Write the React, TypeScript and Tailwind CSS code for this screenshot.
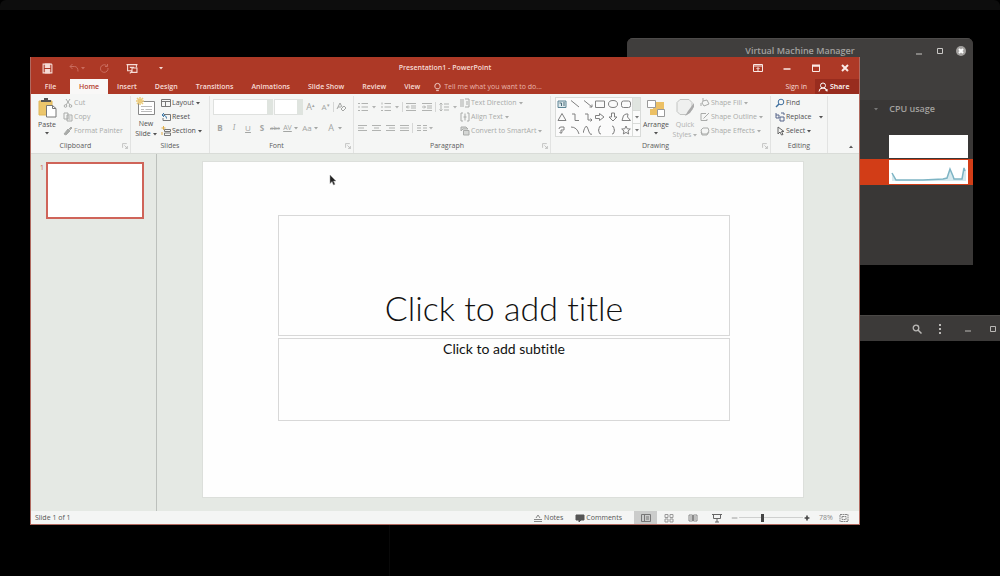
import React, { useState } from 'react';
import { clsx } from 'clsx';

type IconProps = {
  children: React.ReactNode;
  className?: string;
  box?: string;
};

function Icon({ children, className, box = '0 0 10 10' }: IconProps) {
  return (
    <svg
      viewBox={box}
      fill="none"
      stroke="currentColor"
      aria-hidden="true"
      className={clsx('shrink-0', className || 'w-[10px] h-[10px]')}
    >
      {children}
    </svg>
  );
}

function Caret({ className }: { className?: string }) {
  return (
    <Icon box="0 0 4 4" className={clsx('w-[4px] h-[4px]', className)}>
      <path d="M0 1h4L2 3.4z" fill="currentColor" stroke="none" />
    </Icon>
  );
}

const TABS = ['Insert', 'Design', 'Transitions', 'Animations', 'Slide Show', 'Review', 'View'];

const SHAPES = [
  <><path d="M1 2h8v6.500h-8z" fill="#dfe9ec" stroke="#5d8494" /><path d="M2.500 4h2v3M6 4h2M6 6h2" stroke="#4a6c7a" /></>,
  <path d="M1 1.500L9 8" />,
  <><path d="M1 1.500L9 8" /><path d="M9 5.500V8H6.500" /></>,
  <path d="M.5 2h9v6.500h-9z" />,
  <ellipse cx="5" cy="5" rx="4.500" ry="3.500" />,
  <rect x=".5" y="2" width="9" height="6.500" rx="2" />,
  <path d="M5 1.500L9 8.500H1z" />,
  <path d="M2 2h3v6.500h4" />,
  <><path d="M2 2h3v6h4" /><path d="M7.500 6.500L9 8 7.500 9.500" /></>,
  <path d="M.5 3.500h4v-2L9 5 4.500 8.500v-2h-4z" />,
  <path d="M3.500 1h3v4h2.500L5 9 1 5h2.500z" />,
  <path d="M1 8.500l1.500-5L5 2h2L6.500 5l3 3.500z" />,
  <path d="M2 4q0-2 2-2h3v3H4v3M5.500 6.500L4 8.500 2.500 7" />,
  <path d="M1 2q6 0 8 7" />,
  <path d="M0 8Q3-3 5 4t4 5" />,
  <path d="M6 1Q4 1 4 3.500T3 5q1 0 1 2t2 2" />,
  <path d="M4 1q2 0 2 2.500T7 5Q6 5 6 7T4 9" />,
  <path d="M5 1l1.200 2.800L9.300 4 7 6l.7 3L5 7.400 2.300 9 3 6 .7 4l3.100-.2z" />,
];

const SHAPE_NAMES = [
  'Text Box', 'Line', 'Arrow', 'Rectangle', 'Oval', 'Rounded Rectangle',
  'Triangle', 'Elbow Connector', 'Elbow Arrow', 'Right Arrow', 'Down Arrow', 'Freeform',
  'Scribble', 'Arc', 'Curve', 'Left Brace', 'Right Brace', 'Star',
];

const SaveIcon = (
  <Icon className="w-[11px] h-[11px]">
    <path d="M1 1h7.500l.5.500V9H1z" />
    <path d="M3 1h4v3H3zM3 6h4v3H3z" fill="currentColor" />
  </Icon>
);
const UndoIcon = <Icon><path d="M3.500 1L1 3.500 3.500 6M1 3.500h4.500Q9 3.500 9 8.500" /></Icon>;
const RedoIcon = <Icon><path d="M7.500 2.500A3.800 3.800 0 1 0 9 5M8.500 1v2.500H6" /></Icon>;
const ShowIcon = (
  <Icon className="w-[12px] h-[11px]">
    <path d="M0 1.500h10M1 2v5h4M9 2v2M3 4h4" />
    <path d="M5 4.500h4.500v4H5zM3 9.500l2-2" />
  </Icon>
);

type MenuItemProps = {
  icon: React.ReactNode;
  label: string;
  caret?: boolean;
  disabled?: boolean;
  wideCaret?: boolean;
};

function MenuItem({ icon, label, caret, disabled, wideCaret }: MenuItemProps) {
  return (
    <button
      type="button"
      disabled={disabled}
      className={clsx(
        'flex h-[14px] items-center whitespace-nowrap text-left',
        disabled ? 'text-[#a9aba9]' : 'text-[#505050]'
      )}
    >
      {icon}
      <span className="ml-px">{label}</span>
      {caret && <Caret className={wideCaret ? 'ml-2' : 'ml-0.5'} />}
    </button>
  );
}

type GroupProps = {
  label: string;
  launcher?: boolean;
  className?: string;
  children: React.ReactNode;
};

// One labelled section of the ribbon
function Group({ label, launcher, className, children }: GroupProps) {
  return (
    <section
      aria-label={label}
      className={clsx('flex shrink-0 flex-col border-r border-[#e2e3e2]', className)}
    >
      <div className="flex h-[43px]">{children}</div>
      <div
        className={clsx(
          'relative flex h-[14px] items-center justify-center text-[#5c5c5c]',
          launcher && 'pr-[10px]'
        )}
      >
        {label}
        {launcher && (
          <Icon className="absolute right-[2px] h-[6px] w-[6px] text-[#a5a5a5]">
            <path d="M1 8V1h7M4 4l5 5M9 5v4H5" />
          </Icon>
        )}
      </div>
    </section>
  );
}

function Glyph({ label, className, children }: { label: string; className?: string; children: React.ReactNode }) {
  return (
    <button
      type="button"
      disabled
      aria-label={label}
      className={clsx('flex h-[14px] items-center justify-center', className || 'w-[14px]')}
    >
      {children}
    </button>
  );
}

function Divider() {
  return <span className="h-[10px] w-px bg-[#d6d7d6]" />;
}

function Lines({ d }: { d: string }) {
  return <Icon><path d={d} /></Icon>;
}

function Ribbon() {
  return (
    <div className="flex h-[60px] shrink-0 overflow-hidden border-b border-[#d9dcd8] bg-[#f5f6f5] pt-[2px]">
      <Group label="Clipboard" launcher className="w-[100px]">
        <button type="button" className="flex w-[32px] flex-col items-center text-[#505050]">
          <Icon box="0 0 20 21" className="h-[23px] w-[20px]">
            <path d="M2 4h13v14H2z" fill="#ecc66c" stroke="#dfb658" />
            <path d="M4 5V3h3V1h4v2h3v2z" fill="#555" stroke="none" />
            <path d="M9.500 8.500h6l3.500 3V20H9.500z" fill="#fff" stroke="#777" />
            <path d="M15.500 8.500v3H19" stroke="#777" />
          </Icon>
          <span className="leading-[12px]">Paste</span>
          <Caret />
        </button>
        <div>
          <MenuItem disabled label="Cut" icon={<Icon><path d="M3 1l4 6M7 1L3 7" /><circle cx="2.500" cy="8" r="1.300" /><circle cx="7.500" cy="8" r="1.300" /></Icon>} />
          <MenuItem disabled label="Copy" icon={<Icon><path d="M1 1h4v6H1zM4 3h5v6H4zM5.500 5h2M5.500 7h2" /></Icon>} />
          <MenuItem disabled label="Format Painter" icon={<Icon><path d="M1 8l4-5 2 2-4 4zM6 3l2-2 1 1-2 2" fill="currentColor" /></Icon>} />
        </div>
      </Group>

      <Group label="Slides" className="w-[79px]">
        <button type="button" className="flex w-[30px] flex-col items-center text-[#505050]">
          <Icon box="0 0 20 20" className="h-[22px] w-[20px]">
            <path d="M2.500 4.500h16v13h-16z" fill="#fff" stroke="#888" />
            <path d="M5 9.500h11M5 12.500h3M9.500 12.500H16M5 14.500h11" stroke="#bbb" />
            <path d="M4 0v8M0 4h8M1 1l6 6M7 1L1 7" stroke="#eccb7a" strokeWidth="1.500" />
          </Icon>
          <span className="leading-[11px]">New</span>
          <span className="flex items-center gap-0.5 leading-[9px]">Slide<Caret /></span>
        </button>
        <div>
          <MenuItem caret label="Layout" icon={<Icon><path d="M.5 1.500h9v7h-9zM.5 3.500h9M4.500 3.500v5" stroke="#777" /></Icon>} />
          <MenuItem label="Reset" icon={<Icon><path d="M3 2.500h6.500v6H2V6" stroke="#777" /><path d="M5.500 6.500Q5.500 3 1 3M3 1L1 3l2 2" stroke="#3c78a8" /></Icon>} />
          <MenuItem caret label="Section" icon={<Icon><path d="M3.500 3.500h6v2h-6zM3.500 7h6v2.500h-6z" stroke="#777" /><path d="M.5 2h4M2.500 0v4M1 6v3" stroke="#e0ae4a" /></Icon>} />
        </div>
      </Group>

      <Group label="Font" launcher className="w-[144px]">
        <div className="pl-[3px] text-[#a3a5a3]">
          <div className="flex h-[22px] items-center">
            <select aria-label="Font family" disabled className="h-[16px] w-[60px] appearance-none border border-[#dfe1df] border-r-[6px] border-r-[#dfe4df] bg-white opacity-100" />
            <select aria-label="Font size" disabled className="ml-px h-[16px] w-[29px] appearance-none border border-[#dfe1df] border-r-[6px] border-r-[#dfe4df] bg-white opacity-100" />
            <Glyph label="Increase font size" className="w-[15px] text-[9px]">A<sup className="text-[5px]">▴</sup></Glyph>
            <Glyph label="Decrease font size" className="w-[15px] text-[8px]">A<sup className="text-[5px]">▾</sup></Glyph>
            <Divider />
            <Glyph label="Clear formatting"><Icon><path d="M1 7l3-6 2 4M2 5h3M5 7l3-3 2 2-3 3z" /></Icon></Glyph>
          </div>
          <div className="flex h-[20px] items-center text-[8px]">
            <Glyph label="Bold"><b>B</b></Glyph>
            <Glyph label="Italic"><i className="font-serif">I</i></Glyph>
            <Glyph label="Underline"><span className="underline">U</span></Glyph>
            <Glyph label="Shadow"><b>S</b></Glyph>
            <Glyph label="Strikethrough" className="w-[12px]"><s className="text-[6px]">abc</s></Glyph>
            <Glyph label="Character spacing" className="w-[19px] gap-0.5"><span className="text-[7px] underline">AV</span><Caret /></Glyph>
            <Glyph label="Change case" className="w-[20px] gap-0.5">Aa<Caret /></Glyph>
            <Glyph label="Font color" className="w-[30px] gap-1"><span className="text-[9px]">A</span><Caret /></Glyph>
          </div>
        </div>
      </Group>

      <Group label="Paragraph" launcher className="w-[197px]">
        <div className="w-[106px] pl-[2px] text-[#b1b3b1]">
          <div className="flex h-[22px] items-center">
            <Glyph label="Bullets" className="w-[22px] gap-1"><Lines d="M0 1.500h2M3.500 1.500H10M0 5h2M3.500 5H10M0 8.500h2M3.500 8.500H10" /><Caret /></Glyph>
            <Glyph label="Numbering" className="w-[24px] gap-1"><Lines d="M1 .5v2M3.500 1.500H10M0 5h2M3.500 5H10M0 8.500h2M3.500 8.500H10" /><Caret /></Glyph>
            <Divider />
            <Glyph label="Decrease indent" className="w-[17px]"><Lines d="M0 1.500h10M5 4h5M5 6h5M0 8.500h10M3.500 5H0M2 3.500L.5 5 2 6.500" /></Glyph>
            <Glyph label="Increase indent" className="w-[16px]"><Lines d="M0 1.500h10M5 4h5M5 6h5M0 8.500h10M0 5h3.500M2 3.500L3.500 5 2 6.500" /></Glyph>
            <Divider />
            <Glyph label="Line spacing" className="w-[24px] gap-1"><Lines d="M2 1v8M.5 2.500L2 1l1.500 1.500M.5 7.500L2 9l1.500-1.500M5 2h5M5 5h5M5 8h5" /><Caret /></Glyph>
          </div>
          <div className="flex h-[20px] items-center">
            <Glyph label="Align left"><Lines d="M0 2.500h9M0 5h6M0 7.500h9" /></Glyph>
            <Glyph label="Center"><Lines d="M0 2.500h9M2 5h5M0 7.500h9" /></Glyph>
            <Glyph label="Align right"><Lines d="M0 2.500h9M3 5h6M0 7.500h9" /></Glyph>
            <Glyph label="Justify"><Lines d="M0 2.500h9M0 5h9M0 7.500h9" /></Glyph>
            <Divider />
            <Glyph label="Columns" className="w-[23px] gap-0.5"><Lines d="M0 2.500h4M6 2.500h4M0 5h4M6 5h4M0 7.500h4M6 7.500h4" /><Caret /></Glyph>
          </div>
        </div>
        <div>
          <MenuItem disabled caret label="Text Direction" icon={<Icon><path d="M1 1v8M3 1v8M5 1h4v8H5M7 3v4" /></Icon>} />
          <MenuItem disabled caret label="Align Text" icon={<Icon><path d="M3 1H1v8h2M7 1h2v8H7M5 1.500v7M3.500 5h3" /></Icon>} />
          <MenuItem disabled caret label="Convert to SmartArt" icon={<Icon><path d="M1 1h5l2 2H3L1 5zM3.500 4.500H9V9H3.500z" fill="#d5d7d5" /></Icon>} />
        </div>
      </Group>

      <Group label="Drawing" launcher className="w-[220px]">
        <div className="ml-[4px] mt-px flex h-[40px] w-[86px] border border-[#d9dbd9] bg-[#fbfbfb]">
          <div className="grid flex-1 grid-cols-6 grid-rows-3 place-items-center text-[#808080]">
            {SHAPES.map((shape, i) => (
              <button key={SHAPE_NAMES[i]} type="button" aria-label={SHAPE_NAMES[i]}>
                <Icon>{shape}</Icon>
              </button>
            ))}
          </div>
          <div className="flex w-[8px] flex-col divide-y divide-[#d9dbd9] border-l border-[#d9dbd9] text-[#777]">
            <button type="button" disabled aria-label="Scroll up" className="flex-1 bg-[#e0e5e0]" />
            <button type="button" aria-label="Scroll down" className="flex flex-1 items-center justify-center"><Caret /></button>
            <button type="button" aria-label="More shapes" className="flex flex-1 items-center justify-center"><Caret /></button>
          </div>
        </div>
        <button type="button" className="flex w-[30px] flex-col items-center text-[#505050]">
          <Icon box="0 0 20 21" className="h-[23px] w-[20px]">
            <path d="M7 5h11v7h-4v6H4v-6h3z" fill="#ecc064" stroke="none" />
            <path d="M1.500 3.500h8v7h-8zM11.500 12.500h7v7h-7z" fill="#fff" stroke="#999" />
          </Icon>
          <span className="leading-[12px]">Arrange</span>
          <Caret />
        </button>
        <button type="button" disabled className="flex w-[28px] flex-col items-center text-[#b0b2b0]">
          <Icon box="0 0 20 21" className="h-[23px] w-[20px]">
            <path d="M5 2.500h9l3 3v7l-5 5H5l-3-3v-9z" fill="#eff0ef" stroke="#c2c4c2" />
            <path d="M19 6l-6 8-3 5 5-3 4-6z" fill="#aaa" stroke="none" />
          </Icon>
          <span className="leading-[11px]">Quick</span>
          <span className="flex items-center gap-0.5 leading-[9px]">Styles<Caret /></span>
        </button>
        <div className="pl-px">
          <MenuItem disabled caret label="Shape Fill" icon={<Icon><path d="M3 3l4-1 2 4-5 2-2-3zM3 3V0M1 5v3" /></Icon>} />
          <MenuItem disabled caret label="Shape Outline" icon={<Icon><path d="M6 1.500H1v7h6V7M3.500 6.500L9 1" /></Icon>} />
          <MenuItem disabled caret label="Shape Effects" icon={<Icon><path d="M1 4l2-2h5l1 3-2 3H2zM1 6l1 3h5l2-3" /></Icon>} />
        </div>
      </Group>

      <Group label="Editing" className="w-[57px]">
        <div className="pl-1">
          <MenuItem label="Find" icon={<Icon><circle cx="6" cy="4" r="2.800" stroke="#3d6e9e" /><path d="M4 6L1 9" stroke="#3d6e9e" strokeWidth="1.500" /></Icon>} />
          <MenuItem caret wideCaret label="Replace" icon={<Icon><path d="M1 1v5M1 3h3v3H1M5 5h4v4H5zM6 1h3v2" stroke="#56658a" /></Icon>} />
          <MenuItem caret label="Select" icon={<Icon><path d="M3 1v7l2-2 1.500 3L8 8.500 6.500 5.500H9z" stroke="#666" /></Icon>} />
        </div>
      </Group>

      <button type="button" aria-label="Collapse the ribbon" className="ml-auto mr-[6px] self-end pb-1 text-[#555]">
        <Caret className="rotate-180" />
      </button>
    </div>
  );
}

function TitleBar() {
  return (
    <header className="grid h-[22px] shrink-0 grid-cols-[1fr_auto_1fr] items-center text-[#f6dcd6]">
      <div className="flex pl-[2px]">
        <button type="button" aria-label="Save" className="flex w-[29px] justify-center">{SaveIcon}</button>
        <button type="button" aria-label="Undo" className="flex w-[29px] items-center justify-center gap-0.5 text-[#ca6c5e]">{UndoIcon}<Caret /></button>
        <button type="button" aria-label="Repeat" className="flex w-[26px] justify-center text-[#ca6c5e]">{RedoIcon}</button>
        <button type="button" aria-label="Start from beginning" className="flex w-[29px] justify-center">{ShowIcon}</button>
        <button type="button" aria-label="Customize toolbar" className="flex w-[29px] items-center justify-center"><Caret /></button>
      </div>
      <h1 className="font-semibold">Presentation1 - PowerPoint</h1>
      <div className="flex justify-end text-[#fbeae6]">
        <button type="button" aria-label="Ribbon display options" className="flex w-[29px] justify-center"><Icon><path d="M.5 1.500h9v7h-9zM.5 3h9M5 8V5M3.500 6L5 4.500 6.500 6" /></Icon></button>
        <button type="button" aria-label="Minimize" className="flex w-[29px] justify-center"><Icon><path d="M1.500 6h7" strokeWidth="1.500" /></Icon></button>
        <button type="button" aria-label="Restore" className="flex w-[29px] justify-center"><Icon><path d="M1.500 2.500h7v6h-7zM1.500 3h7" /><path d="M1 2.500h8" strokeWidth="2" /></Icon></button>
        <button type="button" aria-label="Close" className="flex w-[29px] justify-center"><Icon><path d="M2 2l6 6M8 2L2 8" strokeWidth="2" /></Icon></button>
      </div>
    </header>
  );
}

function TabStrip() {
  return (
    <nav className="flex h-[15px] shrink-0 items-stretch font-semibold text-[#f7ddd7]">
      <button type="button" className="w-[39px]">File</button>
      <button type="button" className="w-[38px] bg-[#f9f8f7] text-[#b5402f]">Home</button>
      {TABS.map((tab) => (
        <button key={tab} type="button" className="whitespace-nowrap px-[9px]">{tab}</button>
      ))}
      <label className="ml-1 flex min-w-0 flex-1 items-center font-normal">
        <Icon className="h-[10px] w-[9px]">
          <path d="M3.500 7Q2 5.500 2 4a3 3 0 0 1 6 0Q8 5.500 6.500 7zM3.500 9h3" />
        </Icon>
        <input
          type="text"
          aria-label="Tell me what you want to do"
          placeholder="Tell me what you want to do..."
          className="ml-0.5 w-full bg-transparent outline-none placeholder:text-[#e9b5ab]"
        />
      </label>
      <button type="button" className="px-2 font-normal">Sign in</button>
      <button type="button" className="flex w-[44px] items-center gap-0.5 bg-[#982c1e] pl-[3px] text-white">
        <Icon><circle cx="5" cy="3.500" r="2.500" /><path d="M1 9.500Q1 6 5 6t4 3.500M7 8h3" /></Icon>
        Share
      </button>
    </nav>
  );
}

function StatusBar() {
  const [zoom, setZoom] = useState(78);

  return (
    <footer className="flex h-[13px] shrink-0 items-center bg-[#f4f5f4] text-[#555]">
      <span className="pl-[4px]">Slide 1 of 1</span>
      <div className="ml-auto flex h-full items-center">
        <button type="button" className="mr-3 flex items-center gap-px">
          <Icon><path d="M1 6.500h8M1 8.500h8M3 5l2-3 2 3" stroke="#888" /></Icon>Notes
        </button>
        <button type="button" className="mr-3 flex items-center gap-px">
          <Icon><path d="M1 2h8v5H6L4 9V7H1z" fill="#555" stroke="#555" /></Icon>Comments
        </button>
        <button type="button" aria-label="Normal view" className="flex h-full w-[23px] items-center justify-center bg-[#cbcccb] text-[#777]"><Icon><path d="M.5 1.500h9v7h-9zM3.500 1.500v7M5 4h3M5 6h3" /></Icon></button>
        <button type="button" aria-label="Slide sorter" className="flex w-[24px] justify-center text-[#999]"><Icon><path d="M1 1.500h3v3H1zM6 1.500h3v3H6zM1 6h3v3H1zM6 6h3v3H6z" /></Icon></button>
        <button type="button" aria-label="Reading view" className="flex w-[24px] justify-center text-[#888]"><Icon><path d="M1 2h3.500v6H1zM5.500 2H9v6H5.500zM2 4h2M6 4h2M2 6h2M6 6h2" /></Icon></button>
        <button type="button" aria-label="Slide show" className="flex w-[24px] justify-center text-[#666]"><Icon><path d="M0 1.500h10M1.500 2v3.500h7V2M5 6v3M3 9h4" /></Icon></button>
        <button type="button" aria-label="Zoom out" className="ml-[2px] text-[#888]"><Icon className="h-[8px] w-[8px]"><path d="M1 5h7" /></Icon></button>
        <input
          type="range"
          aria-label="Zoom"
          min={10}
          max={200}
          value={zoom}
          onChange={(e) => setZoom(Number(e.target.value))}
          className="h-[9px] w-[64px] appearance-none bg-[linear-gradient(#cfd0cf,#cfd0cf)] bg-[length:100%_1px] bg-center bg-no-repeat [&::-webkit-slider-thumb]:h-[8px] [&::-webkit-slider-thumb]:w-[3px] [&::-webkit-slider-thumb]:appearance-none [&::-webkit-slider-thumb]:bg-[#444]"
        />
        <button type="button" aria-label="Zoom in" className="text-[#444]"><Icon className="h-[8px] w-[8px]"><path d="M2 5h6M5 2v6" strokeWidth="2" /></Icon></button>
        <span className="ml-2 w-[16px] text-[#888]">{zoom}%</span>
        <button type="button" aria-label="Fit slide to window" className="ml-1 mr-[10px] text-[#888]"><Icon><path d="M1 1.500h8v7H1zM3 3.500h4v3H3z" strokeDasharray="2 .5" /></Icon></button>
      </div>
    </footer>
  );
}

function PowerPointWindow() {
  return (
    <main className="absolute bottom-[51px] left-[30px] right-[140px] top-[57px] flex flex-col overflow-hidden border-x border-b border-[#b06a60] bg-[#ad3926]">
      <TitleBar />
      <TabStrip />
      <Ribbon />
      <div className="flex min-h-0 flex-1 bg-[#e5e9e4]">
        <aside className="flex w-[126px] shrink-0 items-start gap-[2px] border-r border-[#bcc0bc] pl-[9px] pt-[8px] text-[#c8604f]">
          <span className="leading-[12px]">1</span>
          <button type="button" aria-label="Slide 1" className="h-[57px] w-[98px] border-2 border-[#cf6459] bg-white" />
        </aside>
        <div className="flex flex-1 pb-[13px] pl-[45px] pr-[55px] pt-[7px]">
          <article className="flex flex-1 flex-col border border-[#dcdfdb] bg-[#fefefe] pb-[76px] pl-[75px] pr-[73px] pt-[53px] text-center font-[Lato,sans-serif] text-[#111] [font-variant-ligatures:none]">
            <div className="flex h-[121px] items-end justify-center border border-[#d8d8d8] pb-[5px]">
              <h2 className="whitespace-nowrap text-[34px] font-light leading-[44px]">Click to add title</h2>
            </div>
            <div className="mt-[2px] flex-1 border border-[#d8d8d8]">
              <p className="text-[14px] leading-[20px]">Click to add subtitle</p>
            </div>
          </article>
        </div>
      </div>
      <StatusBar />
    </main>
  );
}

function VirtManagerWindow() {
  return (
    <section className="absolute left-[627px] right-[27px] top-[38px] flex h-[227px] flex-col overflow-hidden rounded-t-md bg-[#393736] text-[9px] font-semibold text-[#a3a19f]">
      <div className="grid h-[62px] grid-cols-[1fr_auto_1fr] items-start border-t border-[#4d4b4a] bg-[#403e3d]">
        <h2 className="col-start-2 leading-[23px]">Virtual Machine Manager</h2>
        <div className="flex h-[23px] items-center justify-end gap-[11px] pr-[7px] text-[#c9c7c5]">
          <button type="button" aria-label="Minimize"><Icon><path d="M2 8h6" /></Icon></button>
          <button type="button" aria-label="Maximize"><Icon><path d="M2.500 2.500h5v5h-5z" /></Icon></button>
          <button type="button" aria-label="Close">
            <Icon><circle cx="5" cy="5" r="5" fill="#a3a19f" stroke="none" /><path d="M3 3l4 4M7 3L3 7" stroke="#fff" strokeWidth="2" /></Icon>
          </button>
        </div>
      </div>
      <div className="flex h-[35px] items-start justify-end gap-[11px] pr-[38px] pt-[3px] leading-[12px]">
        <Caret className="mt-[4px] text-[#777]" />
        CPU usage
      </div>
      <div className="flex h-[24px] justify-end pr-[5px]">
        <div className="h-[23px] w-[79px] bg-white" />
      </div>
      <div className="flex h-[26px] justify-end bg-[#d23d17] py-px pr-[5px]">
        <svg viewBox="0 0 79 24" className="h-[24px] w-[79px] bg-white" fill="none" aria-label="CPU usage graph">
          <path d="M3 13l4 7h27l20-1 4-1 3-9 3 7 1 3h8l2-11 2 3v10H3z" fill="#d6e9ee" />
          <path d="M3 13l4 7h27l20-1 4-1 3-9 3 7 1 3h8l2-11 1 3" stroke="#7db4c4" strokeWidth="1.500" />
        </svg>
      </div>
    </section>
  );
}

function TerminalWindow() {
  return (
    <section className="absolute bottom-0 left-[389px] right-0 top-[315px] border-l border-[#090909] bg-black">
      <div className="flex h-[26px] items-center justify-end border-t border-[#4a4846] bg-[#3c3a39] pr-[2px] text-[#bab8b6]">
        <button type="button" aria-label="Search" className="mr-[13px]"><Icon><circle cx="4" cy="4" r="2.800" strokeWidth="1.300" /><path d="M6 6l3.500 3.500" strokeWidth="1.500" /></Icon></button>
        <button type="button" aria-label="Menu" className="mr-[18px]">
          <Icon><path d="M4 0h2v2H4zM4 4h2v2H4zM4 8h2v2H4z" fill="currentColor" stroke="none" /></Icon>
        </button>
        <button type="button" aria-label="Minimize" className="mr-[15px]"><Icon><path d="M2 7h6" /></Icon></button>
        <button type="button" aria-label="Maximize"><Icon><path d="M2.500 2.500h5v5h-5z" /></Icon></button>
      </div>
    </section>
  );
}

export default function App() {
  return (
    <div className="relative min-h-screen overflow-hidden bg-black font-['Open_Sans',sans-serif] text-[7px] leading-[10px]">
      <div className="h-[10px] rounded-t-md bg-[#0d0d0d]" />
      <VirtManagerWindow />
      <TerminalWindow />
      <PowerPointWindow />
      {/* Mouse pointer */}
      <Icon box="0 0 8 12" className="absolute left-[329px] top-[174px] h-[12px] w-[8px]">
        <path d="M1 1v8.500l2-2 1.500 3.500 1.500-.7L4.500 7H7z" fill="#222" stroke="#999" strokeWidth=".5" />
      </Icon>
    </div>
  );
}
